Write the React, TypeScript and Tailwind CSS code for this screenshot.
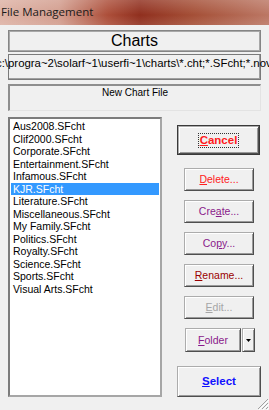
import React from "react";

const items = [
  "Aus2008.SFcht",
  "Clif2000.SFcht",
  "Corporate.SFcht",
  "Entertainment.SFcht",
  "Infamous.SFcht",
  "KJR.SFcht",
  "Literature.SFcht",
  "Miscellaneous.SFcht",
  "My Family.SFcht",
  "Politics.SFcht",
  "Royalty.SFcht",
  "Science.SFcht",
  "Sports.SFcht",
  "Visual Arts.SFcht",
];

const btn =
  "flex items-center justify-center bg-[#f0f0f0] border border-t-[#acacac] border-l-[#acacac] border-r-[#4e4e4e] border-b-[#4e4e4e] shadow-[inset_1px_1px_0_#ffffff,inset_-1px_-1px_0_#9a9a9a]";

function Btn({
  pre,
  u,
  post,
  color,
  className,
}: {
  pre?: string;
  u: string;
  post: string;
  color: string;
  className?: string;
}) {
  return (
    <div className={`${btn} w-[70px] h-[23px] ml-[7px] ${className ?? ""}`}>
      <span className={`text-[10.5px] leading-none ${color}`}>
        {pre}
        <u className="underline-offset-[1px]">{u}</u>
        {post}
      </span>
    </div>
  );
}

export default function App() {
  return (
    <div
      className="w-[269px] h-[410px] bg-[#f0f0f0] relative overflow-hidden"
      style={{ fontFamily: '"Liberation Sans", Arial, sans-serif' }}
    >
      {/* title bar */}
      <div className="h-[25px] relative bg-[linear-gradient(90deg,#dcaea0_0%,#d09888_22%,#a8452f_40%,#8a2412_52%,#a0462c_72%,#b8705c_100%)]">
        <div className="absolute inset-0 bg-[linear-gradient(180deg,rgba(255,255,255,0.22)_0%,rgba(255,255,255,0.05)_60%,rgba(255,255,255,0.15)_100%)]" />
        <div
          className="relative pl-[1px] pt-[4px] text-[11.5px] leading-[16px] text-[#1a1a1a]"
          style={{ fontFamily: '"Open Sans", "Noto Sans", sans-serif' }}
        >
          File Management
        </div>
      </div>

      <div className="px-[8px] pt-[5px] flex flex-col">
        {/* Charts */}
        <div className="h-[22px] border border-[#858585] shadow-[inset_1px_1px_0_#a8a8a8,inset_-1px_-1px_0_#a8a8a8] flex items-center justify-center">
          <span className="text-[16px] leading-none text-black">Charts</span>
        </div>

        {/* path */}
        <div className="mt-[2px] h-[26px] border border-[#7a7a7a] shadow-[inset_-1px_-1px_0_#a0a0a0] flex justify-start">
          <span className="whitespace-nowrap text-[11.4px] leading-[12px] pt-[2px] ml-[-13px] text-black">
            c:\progra~2\solarf~1\userfi~1\charts\*.cht;*.SFcht;*.nov
          </span>
        </div>

        {/* new chart file */}
        <div className="mt-[4px] h-[27px] border-t-2 border-l-2 border-t-[#8e8e8e] border-l-[#8e8e8e] border-r border-b border-r-[#e3e3e3] border-b-[#e3e3e3] flex justify-center">
          <span className="text-[10px] leading-[12px] pt-[1px] text-black">New Chart File</span>
        </div>

        {/* main row */}
        <div className="mt-[6px] flex">
          <div className="w-[157px] h-[280px] bg-white border-2 border-t-[#7c7c7c] border-l-[#7c7c7c] border-r-[#a6a6a6] border-b-[#a6a6a6] pt-[1px]">
            {items.map((it) => {
              const sel = it === "KJR.SFcht";
              return (
                <div
                  key={it}
                  className={`mx-[1px] h-[12.5px] leading-[12.5px] pl-[2px] text-[10.5px] whitespace-nowrap ${
                    sel ? "bg-[#3399ff] text-white" : "text-black"
                  }`}
                >
                  {it}
                </div>
              );
            })}
          </div>

          <div className="ml-[15px] flex flex-col">
            {/* Cancel */}
            <div className="mt-[8px] w-[83px] h-[30px] border border-[#3a3a3a]">
              <div className={`${btn} w-full h-full`}>
                <span className="border border-dotted border-[#333] px-[1px] py-[1px] text-[11.5px] leading-[11px] font-bold text-[#ff1a1a]">
                  <u className="underline-offset-[1px]">C</u>ancel
                </span>
              </div>
            </div>

            <div className="mt-[13px] flex flex-col gap-[9px]">
              <Btn u="D" post="elete..." color="text-[#ff2020]" />
              <Btn pre="Cre" u="a" post="te..." color="text-[#8a1a8a]" />
              <Btn pre="Co" u="p" post="y..." color="text-[#8a1a8a]" />
              <Btn u="R" post="ename..." color="text-[#9a0000]" />
              <Btn u="E" post="dit..." color="text-[#a6a6a6]" />
              <div className="flex ml-[8px] gap-[1px]">
                <div className={`${btn} w-[56px] h-[24px]`}>
                  <span className="text-[10.5px] leading-none text-[#8a1a8a]">
                    <u className="underline-offset-[1px]">F</u>older
                  </span>
                </div>
                <div className={`${btn} w-[13px] h-[24px]`}>
                  <svg width="5" height="3" viewBox="0 0 5 3">
                    <path d="M0 0H5L2.5 3Z" fill="#000" />
                  </svg>
                </div>
              </div>
            </div>

            {/* Select */}
            <div className={`${btn} mt-[14px] w-[84px] h-[31px]`}>
              <span className="text-[11.5px] leading-none font-bold text-[#1010ff]">
                <u className="underline-offset-[1px]">S</u>elect
              </span>
            </div>
          </div>
        </div>
      </div>

      {/* resize grip */}
      <svg
        className="absolute right-0 bottom-0"
        width="12"
        height="12"
        viewBox="0 0 12 12"
      >
        <path d="M11 1L1 11M11 5L5 11M11 9L9 11" stroke="#a0a0a0" strokeWidth="1" />
        <path d="M12 2L2 12M12 6L6 12M12 10L10 12" stroke="#ffffff" strokeWidth="1" />
      </svg>
    </div>
  );
}
